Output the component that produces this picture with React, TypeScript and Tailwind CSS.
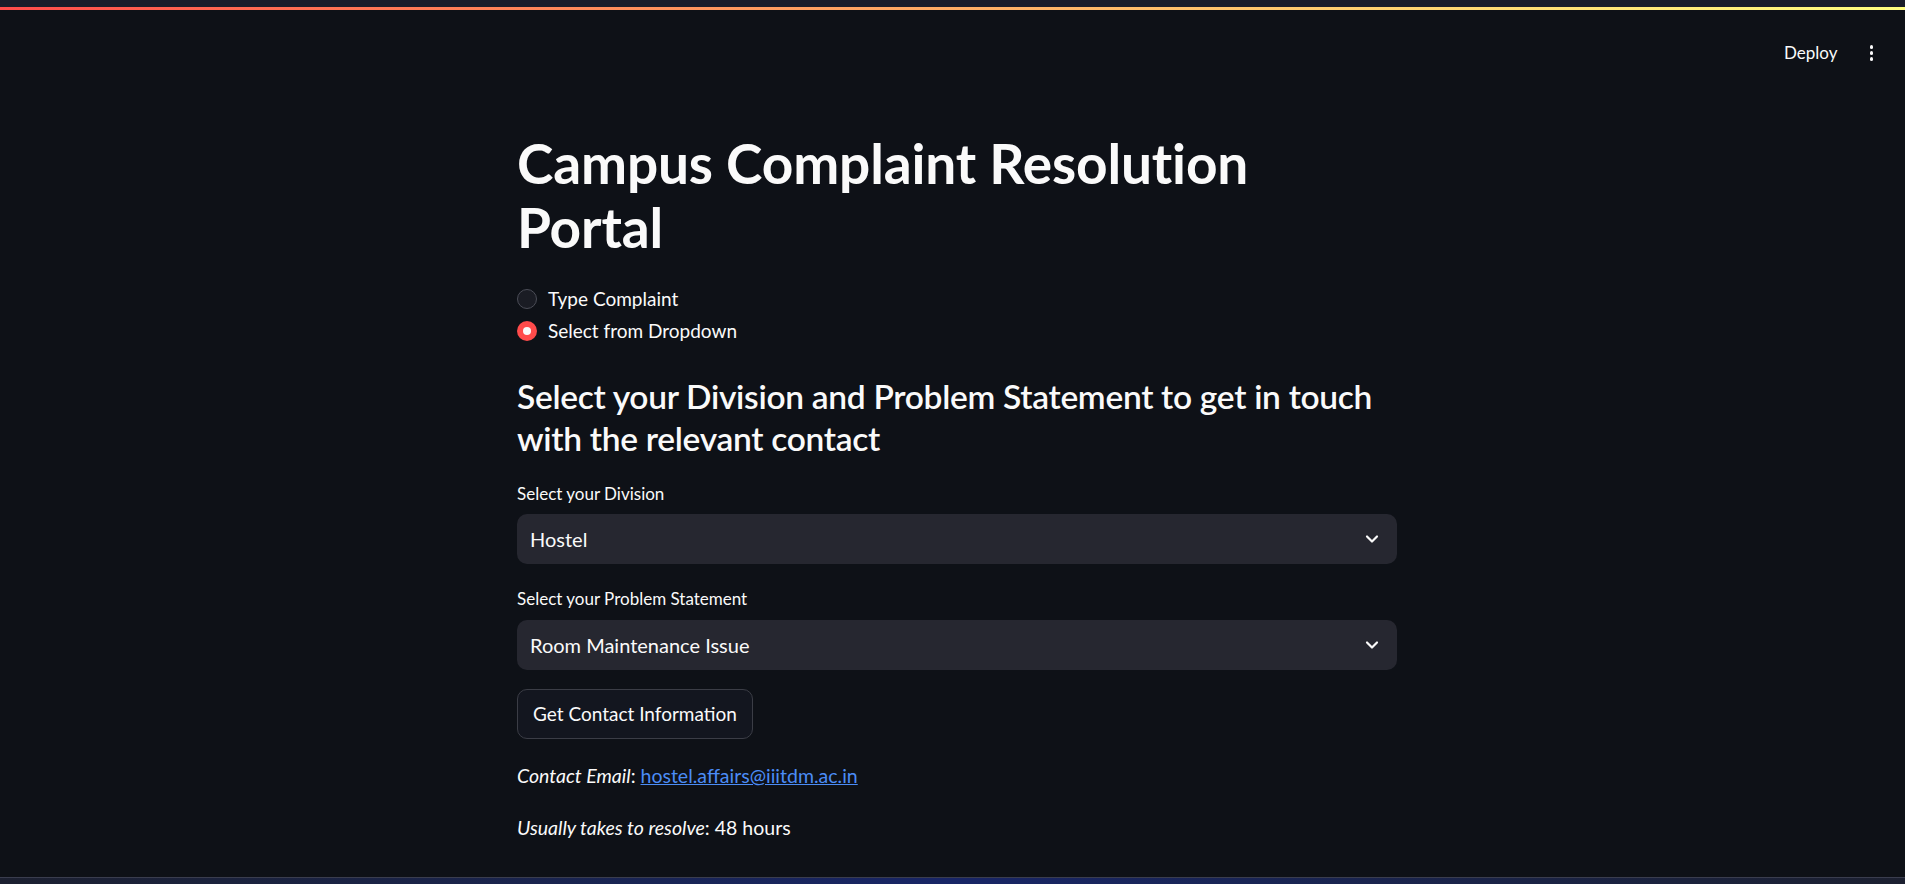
import React from "react";

const font = { fontFamily: "Lato, 'Noto Sans', sans-serif" };

function Chevron() {
  return (
    <svg width="14" height="10" viewBox="0 0 14 10" fill="none">
      <path d="M2 2.5 L7 7.5 L12 2.5" stroke="#fafafa" strokeWidth="2.2" strokeLinecap="round" strokeLinejoin="round" />
    </svg>
  );
}

function Select({ value }: { value: string }) {
  return (
    <div className="flex h-[50px] items-center justify-between rounded-[10px] bg-[#262730] pl-[13px] pr-[18px]">
      <span className="text-[20px] text-[#fafafa]">{value}</span>
      <Chevron />
    </div>
  );
}

export default function App() {
  return (
    <div className="relative min-h-screen overflow-hidden bg-[#0e1117] text-[#fafafa]" style={font}>
      <div className="h-[7px] bg-[#1a1c2a]" />
      <div className="h-[3px] bg-gradient-to-r from-[#ff4b4b] to-[#fffd80]" />
      <div className="flex h-[62px] items-center justify-end pr-[32px] pt-[24px]">
        <span className="text-[17px] text-[#fafafa]">Deploy</span>
        <div className="ml-[32px] flex flex-col gap-[2.5px]">
          <span className="h-[3.5px] w-[3.5px] rounded-full bg-[#fafafa]" />
          <span className="h-[3.5px] w-[3.5px] rounded-full bg-[#fafafa]" />
          <span className="h-[3.5px] w-[3.5px] rounded-full bg-[#fafafa]" />
        </div>
      </div>

      <div className="ml-[517px] w-[880px]">
        <h1 className="mt-[59px] text-[55px] font-bold leading-[64px] tracking-[-0.15px]">
          Campus Complaint Resolution Portal
        </h1>

        <div className="mt-[24px] flex flex-col">
          <div className="flex h-[32px] items-center">
            <span className="h-[20px] w-[20px] rounded-full border-[1.5px] border-[#4b4d57] bg-[#1a1c24]" />
            <span className="ml-[11px] text-[19px]">Type Complaint</span>
          </div>
          <div className="flex h-[32px] items-center">
            <span className="flex h-[20px] w-[20px] items-center justify-center rounded-full bg-[#ff4b4b]">
              <span className="h-[8px] w-[8px] rounded-full bg-[#fafafa]" />
            </span>
            <span className="ml-[11px] text-[19px]">Select from Dropdown</span>
          </div>
        </div>

        <h3 className="mt-[28px] text-[33.5px] font-semibold leading-[42px] tracking-[-0.3px]">
          Select your Division and Problem Statement to get in touch with the relevant contact
        </h3>

        <div className="mt-[24px] text-[17px] leading-[22px]">Select your Division</div>
        <div className="mt-[9px]">
          <Select value="Hostel" />
        </div>

        <div className="mt-[24px] text-[17px] leading-[22px]">Select your Problem Statement</div>
        <div className="mt-[10px]">
          <Select value="Room Maintenance Issue" />
        </div>

        <button className="mt-[19px] flex h-[50px] items-center rounded-[10px] border border-[#3b3d46] bg-[#13161f] px-[15px] text-[19px] text-[#fafafa]">
          Get Contact Information
        </button>

        <p className="mt-[22px] text-[19.5px] leading-[30px]">
          <em>Contact Email</em>:{" "}
          <a className="text-[#4b8cf6] underline">hostel.affairs@iiitdm.ac.in</a>
        </p>
        <p className="mt-[22px] text-[19.5px] leading-[30px]">
          <em>Usually takes to resolve</em>: 48 hours
        </p>
      </div>

      <div className="absolute bottom-0 left-0 right-0 h-[7px] border-t border-[#3a3d4e] bg-gradient-to-r from-[#1c2030] via-[#182566] to-[#1c2030]" />
    </div>
  );
}
